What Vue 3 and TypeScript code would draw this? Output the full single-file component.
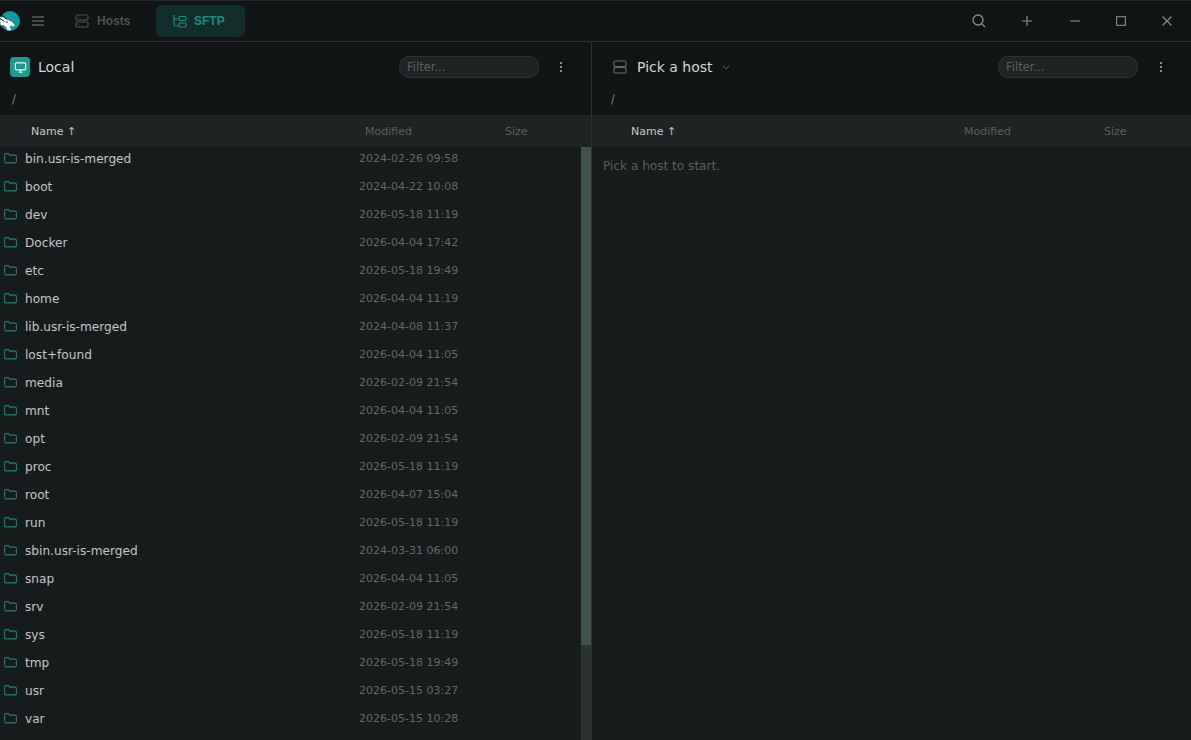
<script setup lang="ts">
const rows: [string, string][] = [
  ['bin.usr-is-merged', '2024-02-26 09:58'],
  ['boot', '2024-04-22 10:08'],
  ['dev', '2026-05-18 11:19'],
  ['Docker', '2026-04-04 17:42'],
  ['etc', '2026-05-18 19:49'],
  ['home', '2026-04-04 11:19'],
  ['lib.usr-is-merged', '2024-04-08 11:37'],
  ['lost+found', '2026-04-04 11:05'],
  ['media', '2026-02-09 21:54'],
  ['mnt', '2026-04-04 11:05'],
  ['opt', '2026-02-09 21:54'],
  ['proc', '2026-05-18 11:19'],
  ['root', '2026-04-07 15:04'],
  ['run', '2026-05-18 11:19'],
  ['sbin.usr-is-merged', '2024-03-31 06:00'],
  ['snap', '2026-04-04 11:05'],
  ['srv', '2026-02-09 21:54'],
  ['sys', '2026-05-18 11:19'],
  ['tmp', '2026-05-18 19:49'],
  ['usr', '2026-05-15 03:27'],
  ['var', '2026-05-15 10:28'],
]
</script>

<template>
  <div class="app">
    <header class="titlebar">
      <div class="logo">
        <svg viewBox="0 0 20 20" width="20" height="20">
          <circle cx="10" cy="10" r="10" fill="#1597a3" />
          <path d="M0 5.5l2 1.5 1-1.5 5 3.5 4 2 3 3-1.5 1.5-3-1-.5 1 1 3.5-3.5.5-1-3-3-2.5-3 .5z" fill="#fff" />
          <path d="M0 3l7 5.5M0 7.5l4.5 3" stroke="#101414" stroke-width="1" />
          <circle cx="7" cy="11" r=".8" fill="#101414" />
        </svg>
      </div>
      <button class="hamb" aria-label="Menu">
        <svg viewBox="0 0 12 10" width="12" height="10"><path d="M0 1h12M0 5h12M0 9h12" stroke="#7d8281" stroke-width="1.2" /></svg>
      </button>
      <div class="tab">
        <svg viewBox="0 0 14 14" width="14" height="14" fill="none" stroke="#4f5453" stroke-width="1.2"><rect x="1" y="1" width="12" height="5" rx="1.3" /><rect x="1" y="8" width="12" height="5" rx="1.3" /><path d="M3.5 3.5h.8M3.5 10.5h.8" /></svg>
        <span>Hosts</span>
      </div>
      <div class="tab active">
        <svg viewBox="0 0 14 14" width="14" height="14" fill="none" stroke="#26877f" stroke-width="1.2"><path d="M1 1v9.5c0 1 .6 1.5 1.5 1.5H5M1 5h4" /><rect x="6" y="2.5" width="7" height="4" rx="1" /><rect x="6" y="9" width="7" height="4" rx="1" /></svg>
        <span>SFTP</span>
      </div>
      <div class="spacer"></div>
      <div class="ctl c1"><svg viewBox="0 0 14 14" width="14" height="14" fill="none" stroke="#8a8f8e" stroke-width="1.3"><circle cx="6" cy="6" r="5" /><path d="M10 10l3 3" /></svg></div>
      <div class="ctl c2"><svg viewBox="0 0 12 12" width="12" height="12" fill="none" stroke="#8a8f8e" stroke-width="1.2"><path d="M6 1v10M1 6h10" /></svg></div>
      <div class="ctl c3"><svg viewBox="0 0 12 12" width="12" height="12" fill="none" stroke="#7d8281" stroke-width="1.2"><path d="M1 6h10" /></svg></div>
      <div class="ctl c4"><svg viewBox="0 0 10 10" width="10" height="10" fill="none" stroke="#7d8281" stroke-width="1.2"><rect x=".6" y=".6" width="8.8" height="8.8" /></svg></div>
      <div class="ctl c5"><svg viewBox="0 0 12 12" width="12" height="12" fill="none" stroke="#8a8f8e" stroke-width="1.2"><path d="M1.5 1.5l9 9M10.5 1.5l-9 9" /></svg></div>
    </header>

    <main class="panes">
      <section class="pane left">
        <div class="pane-head">
          <div class="local-icon">
            <svg viewBox="0 0 14 14" width="13" height="13" fill="none" stroke="#e8f3f2" stroke-width="1.2"><rect x="1.5" y="2" width="11" height="7.5" rx="1" /><path d="M5 12h4M7 9.5V12" /></svg>
          </div>
          <span class="title">Local</span>
          <div class="spacer"></div>
          <div class="filter">Filter...</div>
          <div class="more"><i></i><i></i><i></i></div>
        </div>
        <div class="path">/</div>
        <div class="cols">
          <span class="col-name">Name ↑</span>
          <span class="col-mod">Modified</span>
          <span class="col-size">Size</span>
        </div>
        <div class="body">
          <div class="list">
            <div v-for="r in rows" :key="r[0]" class="row">
              <svg class="folder" viewBox="0 0 13 11" width="13" height="11" fill="none" stroke="#1f7f7c" stroke-width="1.1"><path d="M.6 2c0-.8.5-1.4 1.3-1.4h2.6l1.3 1.5h5.3c.7 0 1.3.6 1.3 1.3v5.2c0 .8-.6 1.3-1.3 1.3H1.9c-.8 0-1.3-.5-1.3-1.3z" /></svg>
              <span class="fname">{{ r[0] }}</span>
              <span class="fdate">{{ r[1] }}</span>
            </div>
          </div>
          <div class="scrollbar"><div class="thumb"></div></div>
        </div>
      </section>

      <section class="pane right">
        <div class="pane-head">
          <svg class="host-icon" viewBox="0 0 14 14" width="14" height="14" fill="none" stroke="#666b6a" stroke-width="1.2"><rect x="1" y="1" width="12" height="5.5" rx="1.3" /><rect x="1" y="7.5" width="12" height="5.5" rx="1.3" /></svg>
          <span class="title pick">Pick a host</span>
          <svg class="chev" viewBox="0 0 8 5" width="8" height="5" fill="none" stroke="#5c6160" stroke-width="1"><path d="M1 1l3 3 3-3" /></svg>
          <div class="spacer"></div>
          <div class="filter">Filter...</div>
          <div class="more"><i></i><i></i><i></i></div>
        </div>
        <div class="path">/</div>
        <div class="cols">
          <span class="col-name">Name ↑</span>
          <span class="col-mod">Modified</span>
          <span class="col-size">Size</span>
        </div>
        <div class="empty">Pick a host to start.</div>
      </section>
    </main>
  </div>
</template>

<style>
html, body { margin: 0; background: #161b1b; overflow: hidden; }
</style>

<style scoped>
.app {
  width: 1191px; height: 740px; overflow: hidden; display: flex; flex-direction: column;
  background: #161b1b; font-family: "DejaVu Sans", sans-serif; font-size: 12px;
}
.titlebar {
  height: 40px; flex: none; display: flex; align-items: center; background: #101414;
  border-top: 1px solid #232928; border-bottom: 1px solid #2a302f; box-sizing: content-box;
}
.logo { width: 20px; height: 20px; display: flex; }
.hamb { margin-left: 12px; width: 12px; height: 10px; padding: 0; border: 0; background: none; display: flex; }
.tab {
  display: flex; align-items: center; gap: 8px; height: 32px; box-sizing: border-box; border-radius: 6px;
  color: #4f5453; font-family: "Liberation Sans", sans-serif; font-weight: 700; font-size: 12px;
}
.tab:not(.active) { margin-left: 31px; width: 81px; }
.tab.active { background: #132d2c; color: #23897f; width: 89px; padding-left: 17px; gap: 7px; }
.spacer { flex: 1; }
.ctl { display: flex; width: 14px; justify-content: center; }
.c1 { margin-right: 34px; }
.c2 { margin-right: 34px; }
.c3 { margin-right: 32px; }
.c4 { margin-right: 32px; }
.c5 { margin-right: 17px; }
.panes { flex: 1; display: flex; min-height: 0; }
.pane { display: flex; flex-direction: column; min-width: 0; }
.left { width: 591px; flex: none; border-right: 1px solid #2a302f; }
.right { flex: 1; }
.pane-head, .path { background: #101414; }
.pane-head { height: 50px; display: flex; align-items: center; padding: 0 0 0 10px; flex: none; }
.right .pane-head { padding-left: 21px; }
.local-icon {
  width: 20px; height: 20px; border-radius: 4px; background: #1f9a93; display: flex;
  align-items: center; justify-content: center;
}
.title { color: #d4d8d6; font-size: 14px; margin-left: 8px; }
.pick { margin-left: 10px; }
.chev { margin-left: 9px; }
.filter {
  width: 140px; height: 22px; box-sizing: border-box; background: #1e2424; border: 1px solid #2c3332;
  border-radius: 10px; color: #5c6160; font-size: 11.5px; line-height: 20px; padding-left: 7px;
}
.more { width: 3px; margin: 0 28px 0 21px; display: flex; flex-direction: column; gap: 2px; }
.right .more { margin-left: 22px; }
.more i { width: 2px; height: 2px; background: #8a8f8e; display: block; }
.path { height: 23px; flex: none; color: #7d8281; font-size: 11.5px; padding-left: 12px; line-height: 14px; }
.right .path { padding-left: 19px; }
.cols {
  height: 32px; flex: none; background: #1e2424; display: flex; align-items: center;
  font-size: 11px; color: #5c6160;
}
.col-name { color: #c4c8c6; margin-left: 31px; width: 334px; }
.right .col-name { margin-left: 39px; width: 333px; }
.col-mod { width: 140px; }
.body { flex: 1; min-height: 0; display: flex; overflow: hidden; }
.list { flex: 1; margin-top: -3px; }
.row { height: 28px; display: flex; align-items: center; flex: none; }
.folder { margin-left: 4px; flex: none; }
.fname { color: #c4c8c6; font-size: 12.15px; margin-left: 8px; width: 334px; padding-top: 1px; }
.fdate { color: #666b6a; font-size: 11px; }
.scrollbar { width: 10px; flex: none; background: #2a3332; }
.thumb { height: 498px; background: #3f524d; }
.empty { color: #5c6160; font-size: 12.1px; padding: 12px 0 0 11px; }
</style>
